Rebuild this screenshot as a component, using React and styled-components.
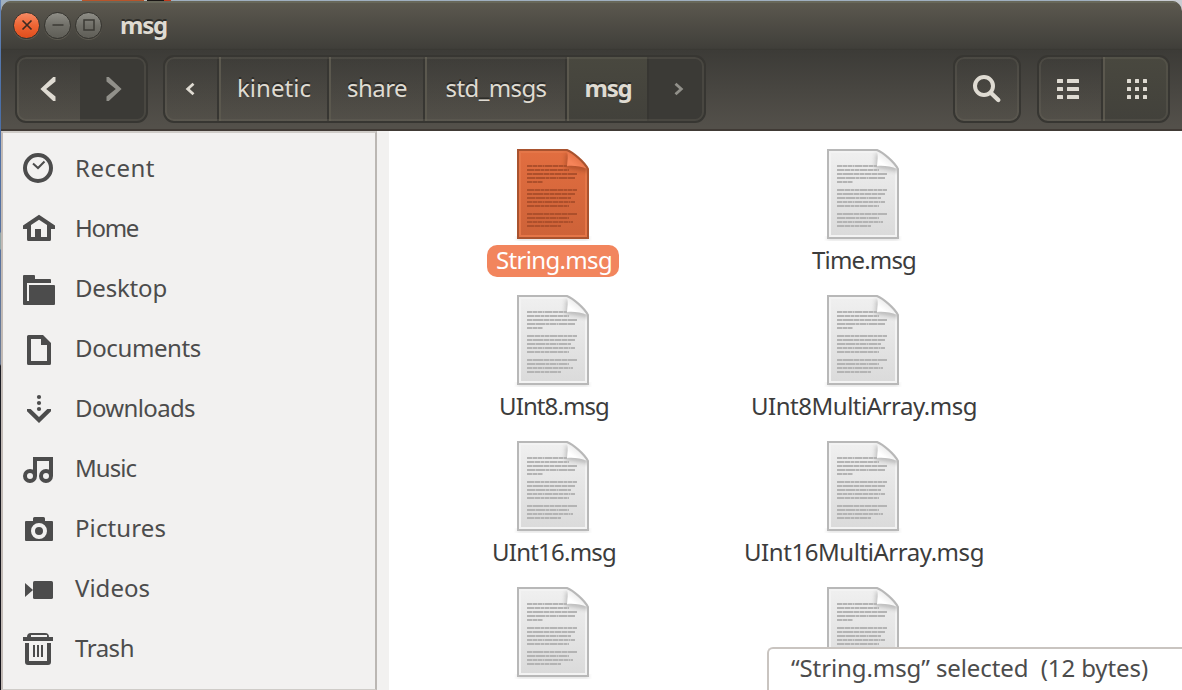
import React, { useLayoutEffect, useRef, useState } from "react";
import styled, { createGlobalStyle, css } from "styled-components";

const GlobalStyle = createGlobalStyle`
  * { box-sizing: border-box; }
  body {
    margin: 0;
    background: #fff;
    font-family: "Noto Sans", "Open Sans", "Liberation Sans", sans-serif;
    font-size: 24px;
    overflow: hidden;
  }
`;

const Desktop = styled.div`
  width: 1182px;
  height: 690px;
  padding: 1px 0 0 1px;
  overflow: hidden;
  background:
    linear-gradient(90deg, transparent 82px, #b8552b 82px 144px, #bbb 144px 147px, #1a1715 147px 164px, #c23a1c 164px 171px, transparent 171px) 0 0 / 100% 1px no-repeat,
    linear-gradient(90deg, transparent 1100px, #c9ccd2 1100px) 0 0 / 100% 12px no-repeat,
    linear-gradient(180deg, #6685b5 0, #4a6fa8 100px, #56719f 232px, #8fa5a8 233px 249px, #56719f 250px, #6b7a92 364px, #1b1c24 366px, #14131a 100%) 0 0 / 1px 100% no-repeat,
    #9fafbf;
`;

const Window = styled.main`
  height: 689px;
  display: flex;
  flex-direction: column;
  border-radius: 10px 10px 0 0;
  overflow: hidden;
  background: #fff;
`;

const TitleBar = styled.header`
  height: 49px;
  flex: none;
  display: flex;
  align-items: center;
  padding: 0 0 1px 12px;
  background: linear-gradient(#5d5a4f, #55524a 25%, #403f3a 96%, #383732);
  box-shadow: inset 0 2px 0 #68685a;
  color: #dfdbd2;
  font-weight: 700;
  text-shadow: 0 -2px 0 #2e2d29;
`;

const WindowButtons = styled.div`
  display: flex;
  gap: 4px;
  margin-right: 18px;
`;

const WindowButton = styled.button`
  width: 27px;
  height: 27px;
  padding: 0;
  border: 1.5px solid #35342f;
  border-radius: 50%;
  display: grid;
  place-items: center;
  background: ${(p) => (p.$close ? "linear-gradient(#f58a64, #ee6534 50%, #e04d1c)" : "linear-gradient(#8f8e87, #706f68 50%, #5f5e57)")};
  box-shadow: 0 1px 0 #5e5b52;
`;

const Toolbar = styled.nav`
  height: 81px;
  flex: none;
  display: flex;
  align-items: flex-start;
  padding: 5px 12px 0 14px;
  background: linear-gradient(#3c3b37, #53504a 96%);
  border-bottom: 2px solid #403a35;
`;

const Group = styled.div`
  position: relative;
  display: flex;
  height: 68px;
  border: 2px solid #373632;
  border-radius: 11px;
  overflow: hidden;
  ${(p) => p.$before && css`margin-left: ${p.$before};`}
  &::after {
    content: "";
    position: absolute;
    inset: 0;
    border: 2px solid rgba(115, 112, 100, 0.25);
    border-radius: 9px;
    pointer-events: none;
  }
`;

const Segment = styled.button`
  width: ${(p) => p.$w}px;
  height: 64px;
  padding: ${(p) => p.$pad || "0 0 2px"};
  display: flex;
  align-items: center;
  justify-content: center;
  border: 0;
  font: inherit;
  font-weight: ${(p) => (p.$active ? 700 : 400)};
  color: ${(p) => (p.$off ? "#91908a" : "#dfdbd2")};
  text-shadow: 0 -2px 0 #2e2d29;
  background: ${(p) =>
    p.$off ? "#3b3a36" : p.$active ? "linear-gradient(#49483f, #42413b)" : "linear-gradient(rgba(60,59,55,.2), rgba(85,82,73,.25))"};
  ${(p) => p.$split && css`border-right: 2px solid #373632;`}
  ${(p) => p.$lit && css`border-left: 2px solid #5b584e;`}
`;

const Body = styled.div`
  flex: 1;
  min-height: 0;
  display: flex;
`;

const Sidebar = styled.aside`
  width: 376px;
  flex: none;
  padding-top: 5px;
  background: #f2f1f0;
  border: 2px solid #bbb7b3;
  border-top-color: #cfccc8;
  border-left-color: #c2bab5;
  border-bottom: 1px solid #cfccc8;
`;

const Gutter = styled.div`
  width: 12px;
  flex: none;
  background: #f2f1f0;
`;

const Place = styled.a`
  height: 60px;
  display: flex;
  align-items: center;
  gap: 19px;
  padding-left: 19px;
  color: #4c4c4c;
`;

const PlaceIcon = styled.svg`
  width: 34px;
  height: 34px;
  flex: none;
  fill: #4c4c4c;
`;

const Files = styled.section`
  position: relative;
  flex: 1;
  display: grid;
  grid-template-columns: 310px 310px;
  grid-auto-rows: 146px;
  align-content: start;
  padding: 16px 0 0 9px;
  overflow: hidden;
`;

const FileItem = styled.div`
  display: flex;
  flex-direction: column;
  align-items: center;
  gap: 2px;
  color: #3c3c3c;
`;

const FileName = styled.div`
  height: 32px;
  padding: 0 7px 2px 9px;
  display: flex;
  align-items: center;
  border-radius: 10px;
  ${(p) => p.$selected && css`background: #f2855d; color: #fff;`}
`;

const Status = styled.div`
  position: absolute;
  right: 0;
  bottom: 0;
  width: 415px;
  height: 43px;
  padding: 0 0 3px 22px;
  display: flex;
  align-items: center;
  background: #fff;
  border: solid #c9c4c0;
  border-width: 2px 0 0 2px;
  border-radius: 6px 0 0 0;
  color: #4c4c4c;
`;

const Tracked = styled.span`
  white-space: pre;
  line-height: 32px;
`;

/* Spreads the letters evenly so that a label takes a given width. */
function Label({ width, children }) {
  const ref = useRef(null);
  const [spacing, setSpacing] = useState(0);
  useLayoutEffect(() => {
    ref.current.style.letterSpacing = "0px";
    const natural = ref.current.getBoundingClientRect().width;
    const next = (width - natural) / children.length;
    ref.current.style.letterSpacing = `${next}px`;
    setSpacing(next);
  }, [width, children]);
  return <Tracked ref={ref} style={{ letterSpacing: `${spacing}px` }}>{children}</Tracked>;
}

function Chevron({ small, right }) {
  const flip = right ? "scale(-1 1)" : undefined;
  return small ? (
    <svg width="10" height="14" viewBox="-5 -7 10 14">
      <path transform={flip} d="M3.5 -5.3L-2.3 0L3.5 5.3" fill="none" stroke="currentColor" strokeWidth="2.8" />
    </svg>
  ) : (
    <svg width="18" height="26" viewBox="-9 -13 18 26">
      <path transform={flip} d="M7.5 -12V-7.5L-1.8 0L7.5 7.5V12H5.2L-7.6 0L5.2 -12Z" fill="currentColor" />
    </svg>
  );
}

const ys = [0, 8, 16];

const ListGlyph = () => (
  <svg width="22" height="20" fill="currentColor">
    {ys.map((y) => (
      <g key={y}>
        <rect x="0" y={y} width="6" height="4" rx=".6" />
        <rect x="10" y={y} width="12" height="4" rx=".6" />
      </g>
    ))}
  </svg>
);

const GridGlyph = () => (
  <svg width="20" height="20" fill="currentColor">
    {ys.map((y) => ys.map((x) => <rect key={`${x}-${y}`} x={x} y={y} width="4" height="4" rx=".6" />))}
  </svg>
);

const SearchGlyph = () => (
  <svg width="30" height="30" fill="none" stroke="currentColor">
    <circle cx="12" cy="12" r="9" strokeWidth="4" />
    <path d="M19 19L26.3 26" strokeWidth="4.4" strokeLinecap="round" />
  </svg>
);

const stroke4 = { fill: "none", stroke: "#4c4c4c", strokeWidth: 4 };

const places = [
  ["Recent", 80, <><circle cx="16" cy="17" r="13" {...stroke4} /><path d="M11 12.5L16 17L22.5 10.5" {...stroke4} strokeWidth="2" /></>],
  ["Home", 63, <><path fillRule="evenodd" d="M17 3.8L33 14.5V18H29V28.5Q29 30 27.5 30H6.5Q5 30 5 28.5V18H1V14.5ZM17 8.7L9 14V26H25V14Z" /><path d="M13 18H19V27H13Z" /></>],
  ["Desktop", 92, <path d="M2 4H12Q13 4 13 5V8H28Q29 8 29 9V12H5V30H7V14H32Q33 14 33 15V33Q33 34 32 34H2Q1 34 1 33V5Q1 4 2 4Z" />],
  ["Documents", 126, <path fillRule="evenodd" d="M6.5 4H21L29 12V32.5Q29 34 27.5 34H6.5Q5 34 5 32.5V5.5Q5 4 6.5 4ZM9 8V30H25V14H19V8Z" />],
  ["Downloads", 120, <><circle cx="17" cy="6" r="2.1" /><circle cx="17" cy="12" r="2.1" /><circle cx="17" cy="18" r="2.1" /><path d="M5 18H8.7L17 26L25.3 18H29V20.2L17 32L5 20.2Z" /></>],
  ["Music", 61, <><path d="M13 25V8H29V25" {...stroke4} /><circle cx="8" cy="25" r="5" {...stroke4} /><circle cx="24" cy="25" r="5" {...stroke4} /></>],
  ["Pictures", 91, <><path d="M4 10H11V7.5Q11 6 12.5 6H21.5Q23 6 23 7.5V10H30Q31 10 31 11V29Q31 30 30 30H4Q3 30 3 29V11Q3 10 4 10Z" /><circle cx="17" cy="20" r="6" fill="none" stroke="#f2f1f0" strokeWidth="4" /></>],
  ["Videos", 75, <><rect x="11" y="10" width="20" height="18" rx="1.6" /><path d="M3 12L11 19L3 26Z" /></>],
  ["Trash", 59, <><path fillRule="evenodd" d="M1 6H5Q5 2 9 2H23Q27 2 27 6H31V10H1ZM9 4V6H25V4Z" /><path d="M3 12H7V30H25V12H29V31Q29 34 26 34H6Q3 34 3 31ZM11 14H13V26H11ZM15 14H17V26H15ZM19 14H21V26H19Z" /></>],
];

const textLines = [
  [16, 40], [20, 42], [24, 50], [28, 48], [32, 16],
  [40, 50], [44, 48], [48, 44], [52, 48], [56, 42],
  [64, 50], [68, 42], [72, 46], [76, 34],
];
const dashes = ["5 1 4 1 4 1 1 1 7 1", "7 1 5 1 3 1 4 1", "5 1 10 1 5 1 4 1 6 1", "8 1 9 1 3 1 6 1 1 1"];
const outline = "M1 1H50C56 3.5 67 12.5 71 20V89H1Z";

function Page({ selected }) {
  const id = selected ? "sel" : "doc";
  const c = selected
    ? { edge: "#a9532f", top: "#e26e40", bottom: "#cd6238", inner: "#e57648", text: "#ad4f2b", fold: "#f68459", foldEnd: "#df6d41", shade: "#8c3b1b" }
    : { edge: "#b8b8b8", top: "#f0f0f0", bottom: "#dadada", inner: "#f3f3f3", text: "#b4b4b4", fold: "#ffffff", foldEnd: "#e6e6e6", shade: "#8e8e8e" };
  return (
    <svg width="78" height="96" viewBox="-3 -2 78 96">
      <defs>
        <linearGradient id={`${id}-body`} x1="0" y1="0" x2="0" y2="1">
          <stop offset="0" stopColor={c.top} /><stop offset="1" stopColor={c.bottom} />
        </linearGradient>
        <linearGradient id={`${id}-fold`} x1="0" y1="1" x2=".65" y2=".25">
          <stop offset="0" stopColor={c.fold} /><stop offset=".4" stopColor={c.fold} /><stop offset="1" stopColor={c.foldEnd} />
        </linearGradient>
        <filter id={`${id}-blur`} x="-30%" y="-30%" width="160%" height="160%"><feGaussianBlur stdDeviation="2" /></filter>
        <clipPath id={`${id}-clip`}><path d={outline} /></clipPath>
      </defs>
      <path d="M0 88H72V90.5H0Z" fill="#000" opacity=".22" filter={`url(#${id}-blur)`} />
      <path d={outline} fill={`url(#${id}-body)`} />
      <path d="M3 3H49.5C56 6 66 14 69 20.5V87H3Z" fill="none" stroke={c.inner} strokeWidth="2" />
      <g clipPath={`url(#${id}-clip)`}>
        <path d="M49 4L48.5 19L72 23V14Z" fill={c.shade} opacity=".5" filter={`url(#${id}-blur)`} />
      </g>
      {textLines.map(([y, w], i) => (
        <path key={y} d={`M10 ${y + 1}H${10 + w}`} stroke={c.text} strokeWidth="2" strokeDasharray={dashes[i % dashes.length]} />
      ))}
      {textLines.map(([y, w]) => (
        <path key={y} d={`M10 ${y + 1}H${10 + w}`} stroke={c.text} strokeWidth="2" opacity=".5" />
      ))}
      <path d="M50 2C51.5 7 50.3 12 50 17C56 16.5 64 17 70.5 20C66 13 57 4.5 50 2Z" fill={`url(#${id}-fold)`} />
      <path d={outline} fill="none" stroke={c.edge} strokeWidth="2" />
    </svg>
  );
}

const files = [
  ["String.msg", 116, true], ["Time.msg", 104],
  ["UInt8.msg", 110], ["UInt8MultiArray.msg", 226],
  ["UInt16.msg", 124], ["UInt16MultiArray.msg", 240],
  [], [],
];

export default function App() {
  return (
    <Desktop>
      <GlobalStyle />
      <Window>
        <TitleBar>
          <WindowButtons>
            <WindowButton $close aria-label="Close">
              <svg width="12" height="12"><path d="M1.5 1.5L10.5 10.5M10.5 1.5L1.5 10.5" stroke="#3c2a22" strokeWidth="1.7" /></svg>
            </WindowButton>
            <WindowButton aria-label="Minimize">
              <svg width="12" height="12"><path d="M.5 6H11.5" stroke="#3b3a35" strokeWidth="1.5" /></svg>
            </WindowButton>
            <WindowButton aria-label="Maximize">
              <svg width="12" height="12"><rect x="1" y="1" width="10" height="10" fill="none" stroke="#3b3a35" strokeWidth="1.5" /></svg>
            </WindowButton>
          </WindowButtons>
          <Label width={47}>msg</Label>
        </TitleBar>
        <Toolbar>
          <Group>
            <Segment $w={63} $pad="0 2px 0 0" aria-label="Back"><Chevron /></Segment>
            <Segment $w={66} $pad="0 0 0 2px" $off aria-label="Forward"><Chevron right /></Segment>
          </Group>
          <Group $before="15px">
            <Segment $w={54} $pad="0 3px 0 0" $split aria-label="Scroll left"><Chevron small /></Segment>
            <Segment $w={110} $split $lit><Label width={74}>kinetic</Label></Segment>
            <Segment $w={96} $split $lit><Label width={60}>share</Label></Segment>
            <Segment $w={142} $split $lit><Label width={101}>std_msgs</Label></Segment>
            <Segment $w={82} $split $lit $active><Label width={47}>msg</Label></Segment>
            <Segment $w={55} $pad="0 0 0 4px" $off aria-label="Scroll right"><Chevron small right /></Segment>
          </Group>
          <Group $before="auto">
            <Segment $w={64} $pad="0 0 1px" aria-label="Search"><SearchGlyph /></Segment>
          </Group>
          <Group $before="16px">
            <Segment $w={64} $pad="0 4px 0 0" $split aria-label="List view"><ListGlyph /></Segment>
            <Segment $w={65} $pad="0 0 0 1px" $lit $active aria-label="Icon view"><GridGlyph /></Segment>
          </Group>
        </Toolbar>
        <Body>
          <Sidebar>
            {places.map(([name, width, icon]) => (
              <Place key={name}>
                <PlaceIcon viewBox="0 0 34 34">{icon}</PlaceIcon>
                <Label width={width}>{name}</Label>
              </Place>
            ))}
          </Sidebar>
          <Gutter />
          <Files>
            {files.map(([name, width, selected], i) => (
              <FileItem key={i}>
                <Page selected={selected} />
                {name && <FileName $selected={selected}><Label width={width}>{name}</Label></FileName>}
              </FileItem>
            ))}
            <Status><Label width={357}>“String.msg” selected  (12 bytes)</Label></Status>
          </Files>
        </Body>
      </Window>
    </Desktop>
  );
}
